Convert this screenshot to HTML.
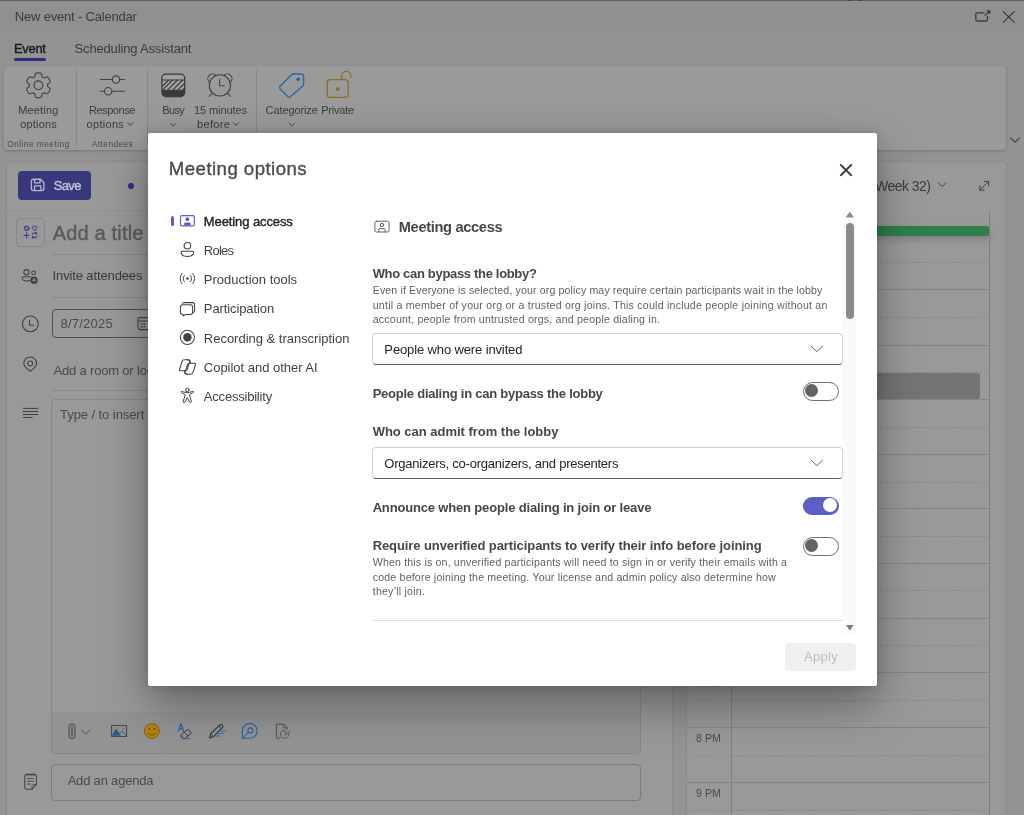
<!DOCTYPE html>
<html lang="en">
<head>
<meta charset="utf-8">
<title>New event - Calendar</title>
<style>
html,body{margin:0;padding:0;background:#939393;}
body{width:1024px;height:815px;overflow:hidden;font-family:"Liberation Sans",sans-serif;}
#app{will-change:transform;position:relative;width:1024px;height:815px;overflow:hidden;background:#939393;}
#app div,#app svg,#app span.t{position:absolute;}
span.t{white-space:nowrap;line-height:16px;height:16px;}
svg{overflow:visible;}
.titlebar{left:0;top:0;width:1024px;height:33px;background:#909090;border-top:1px solid #5e5e5e;box-sizing:border-box;border-top-right-radius:1.5px;}
.ribbon{left:4px;top:66px;width:1002px;height:84px;background:#9a9a9a;border-radius:4px;box-shadow:0 1px 3px rgba(0,0,0,.22);}
.vsep{width:1px;background:#868686;top:70px;height:76px;}
.tabline{left:14px;top:58px;width:32px;height:3px;border-radius:2px;background:#2b2b7f;}
.lpanel{left:7px;top:162px;width:665px;height:670px;background:#999999;border-radius:4px;box-shadow:0 0 2px rgba(0,0,0,.18);}
.rpanel{left:687px;top:162px;width:319px;height:670px;background:#999999;border-radius:4px;box-shadow:0 0 2px rgba(0,0,0,.18);}
.hline{height:1px;background:#888888;}
.save{left:18px;top:171px;width:73px;height:29px;background:#38397b;border-radius:4px;}
.dot{left:127.5px;top:183px;width:6px;height:6px;border-radius:3px;background:#2f2f86;}
.tbox{left:16px;top:218px;width:29px;height:28.5px;box-sizing:border-box;border:1px solid #878787;border-radius:4px;}
.datebox{left:52px;top:309px;width:110px;height:29px;box-sizing:border-box;border:1px solid #4e4e4e;border-radius:4px;}
.tarea{left:51px;top:399px;width:590px;height:355px;box-sizing:border-box;border:1px solid #888888;border-radius:4px;overflow:hidden;}
.tarea .band{left:0;top:312px;width:590px;height:43px;background:#939393;}
.agenda{left:51px;top:764px;width:590px;height:36.5px;box-sizing:border-box;border:1px solid #7c7c7c;border-radius:4px;}
.gridbox{left:687px;top:205px;width:302px;height:640px;}
.hr{left:0;width:302px;height:1px;background:#858585;}
.hd{left:0;width:302px;height:1px;background:repeating-linear-gradient(90deg,#8a8a8a 0 2.5px,rgba(0,0,0,0) 2.5px 4.5px);}
.green{left:731px;top:226px;width:258px;height:10px;background:#2f7f4a;border-radius:0 2px 2px 0;box-shadow:0 3px 6px rgba(0,0,0,.18);}
.evt{left:731px;top:373px;width:249px;height:26px;background:#757575;border-radius:3px;}
#modal{left:148px;top:133px;width:729px;height:553px;background:#ffffff;border-radius:2px;box-shadow:0 18px 46px rgba(0,0,0,.36),0 0 10px rgba(0,0,0,.15);}
.dd{box-sizing:border-box;left:372px;width:471px;height:32px;border:1px solid #d1d1d1;border-bottom:1px solid #616161;border-radius:4px;background:#fff;}
.track{left:843.3px;top:207px;width:13px;height:427px;background:#fafafa;}
.thumb{left:845.8px;top:222.8px;width:8px;height:96.5px;border-radius:4px;background:#8b8b8b;}
.divider{left:373px;top:620px;width:470px;height:1px;background:#e0e0e0;}
.apply{left:785px;top:642.5px;width:71px;height:28.5px;background:#f0f0f0;border-radius:4px;}
.tog{width:36px;height:19px;box-sizing:border-box;border-radius:10px;left:803px;}
.tog.off{border:1px solid #707070;background:#fff;}
.tog.off i{position:absolute;left:1.3px;top:1.2px;width:13px;height:13px;border-radius:7px;background:#646464;}
.tog.on{background:#5b5fc7;}
.tog.on i{position:absolute;right:1.8px;top:1.5px;width:14px;height:14px;border-radius:7px;background:#fff;}
.navbar{left:171px;top:216.4px;width:2.8px;height:10px;border-radius:1.5px;background:#5b5fc7;}

</style>
</head>
<body>
<div id="app">
<div class="titlebar"></div>
<div class="tabline"></div>
<div class="ribbon"></div>
<div class="vsep" style="left:76px"></div>
<div class="vsep" style="left:147px"></div>
<div class="vsep" style="left:255.5px"></div>
<div class="lpanel"></div>
<div class="rpanel"></div>
<div class="save"></div>
<div class="dot"></div>
<div class="hline" style="left:7px;top:210px;width:665px;background:#929292"></div>
<div class="tbox"></div>
<div class="hline" style="left:53px;top:254px;width:588px"></div>
<div class="hline" style="left:53px;top:297px;width:588px"></div>
<div class="datebox"></div>
<div class="hline" style="left:53px;top:390px;width:588px"></div>
<div class="tarea"><div class="band"></div></div>
<div class="agenda"></div>
<div class="gridbox">
<div style="left:44px;top:5px;width:1px;height:640px;background:#7f7f7f"></div>
<div style="left:301.5px;top:5px;width:1px;height:640px;background:#7f7f7f"></div>
<div class="hd" style="top:57px"></div>
<div class="hr" style="top:84px"></div>
<div class="hd" style="top:112px"></div>
<div class="hr" style="top:139.5px"></div>
<div class="hd" style="top:167px"></div>
<div class="hr" style="top:194px"></div>
<div class="hd" style="top:221.5px"></div>
<div class="hr" style="top:248.5px"></div>
<div class="hd" style="top:276.5px"></div>
<div class="hr" style="top:303px"></div>
<div class="hd" style="top:330.5px"></div>
<div class="hr" style="top:358px"></div>
<div class="hd" style="top:385px"></div>
<div class="hr" style="top:412.5px"></div>
<div class="hd" style="top:440px"></div>
<div class="hr" style="top:467px"></div>
<div class="hd" style="top:495px"></div>
<div class="hr" style="top:522px"></div>
<div class="hd" style="top:550px"></div>
<div class="hr" style="top:577px"></div>
<div class="hd" style="top:605px"></div>
</div>
<div class="green"></div>
<div class="evt"></div>
<svg id="bgicons" width="1024" height="815" viewBox="0 0 1024 815" style="left:0;top:0" fill="none" stroke-linecap="round" stroke-linejoin="round">
<path d="M848.3 0.5H850.3M859.6 0.5H861.6" stroke="#3a3a4a" stroke-width="1.2" stroke-linecap="butt"/>
<!-- window buttons -->
<g stroke="#3d3d3d" stroke-width="1.1">
<path d="M984 12.9H977.2Q975.8 12.9 975.8 14.3V19.6Q975.8 21 977.2 21H986.1Q987.5 21 987.5 19.6V16.4" stroke-width="1.35"/><path d="M985 15.4L988.6 12"/><path d="M987 10.7L990.1 10.5L989.9 13.6Z" fill="#3d3d3d" stroke-width="0.6"/>
<path d="M1003.2 11.5L1014.3 22.4M1014.3 11.5L1003.2 22.4"/>
<path d="M1010.6 137.8L1015 142.2L1019.4 137.8"/>
</g>
<g stroke="#3d3d3d" stroke-width="0.95">
<path d="M127.6 122.8L130.2 125.4L132.8 122.8"/>
<path d="M170.6 123.4L173.2 126L175.8 123.4"/>
<path d="M233.6 122.8L236.2 125.4L238.8 122.8"/>
<path d="M289 123.4L291.7 126L294.4 123.4"/>
</g>
<!-- ribbon: gear -->
<g stroke="#424242" stroke-width="1.15">
<path d="M47.50 85.30 L47.50 85.54 L47.51 85.78 L47.54 86.02 L47.60 86.27 L47.72 86.53 L47.96 86.81 L48.36 87.15 L48.91 87.53 L49.47 87.96 L49.85 88.37 L50.04 88.75 L50.07 89.09 L50.03 89.42 L49.95 89.73 L49.84 90.04 L49.72 90.34 L49.59 90.64 L49.44 90.93 L49.29 91.21 L49.14 91.50 L48.97 91.78 L48.80 92.05 L48.61 92.32 L48.42 92.58 L48.22 92.84 L48.01 93.08 L47.78 93.31 L47.52 93.51 L47.20 93.65 L46.79 93.69 L46.24 93.56 L45.59 93.29 L44.98 93.00 L44.49 92.82 L44.12 92.76 L43.84 92.78 L43.59 92.85 L43.37 92.95 L43.16 93.06 L42.95 93.18 L42.74 93.30 L42.54 93.43 L42.35 93.57 L42.16 93.75 L42.00 93.99 L41.87 94.33 L41.78 94.85 L41.72 95.52 L41.63 96.21 L41.47 96.75 L41.23 97.10 L40.95 97.31 L40.65 97.43 L40.34 97.52 L40.02 97.58 L39.70 97.62 L39.37 97.66 L39.05 97.68 L38.72 97.69 L38.40 97.70 L38.08 97.69 L37.75 97.68 L37.43 97.66 L37.10 97.62 L36.78 97.58 L36.46 97.52 L36.15 97.43 L35.85 97.31 L35.57 97.10 L35.33 96.75 L35.17 96.21 L35.08 95.52 L35.02 94.85 L34.93 94.33 L34.80 93.99 L34.64 93.75 L34.45 93.57 L34.26 93.43 L34.06 93.30 L33.85 93.18 L33.64 93.06 L33.43 92.95 L33.21 92.85 L32.96 92.78 L32.68 92.76 L32.31 92.82 L31.82 93.00 L31.21 93.29 L30.56 93.56 L30.01 93.69 L29.60 93.65 L29.28 93.51 L29.02 93.31 L28.79 93.08 L28.58 92.84 L28.38 92.58 L28.19 92.32 L28.00 92.05 L27.83 91.78 L27.66 91.50 L27.51 91.21 L27.36 90.93 L27.21 90.64 L27.08 90.34 L26.96 90.04 L26.85 89.73 L26.77 89.42 L26.73 89.09 L26.76 88.75 L26.95 88.37 L27.33 87.96 L27.89 87.53 L28.44 87.15 L28.84 86.81 L29.08 86.53 L29.20 86.27 L29.26 86.02 L29.29 85.78 L29.30 85.54 L29.30 85.30 L29.30 85.06 L29.29 84.82 L29.26 84.58 L29.20 84.33 L29.08 84.07 L28.84 83.79 L28.44 83.45 L27.89 83.07 L27.33 82.64 L26.95 82.23 L26.76 81.85 L26.73 81.51 L26.77 81.18 L26.85 80.87 L26.96 80.56 L27.08 80.26 L27.21 79.96 L27.36 79.67 L27.51 79.39 L27.66 79.10 L27.83 78.82 L28.00 78.55 L28.19 78.28 L28.38 78.02 L28.58 77.76 L28.79 77.52 L29.02 77.29 L29.28 77.09 L29.60 76.95 L30.01 76.91 L30.56 77.04 L31.21 77.31 L31.82 77.60 L32.31 77.78 L32.68 77.84 L32.96 77.82 L33.21 77.75 L33.43 77.65 L33.64 77.54 L33.85 77.42 L34.06 77.30 L34.26 77.17 L34.45 77.03 L34.64 76.85 L34.80 76.61 L34.93 76.27 L35.02 75.75 L35.08 75.08 L35.17 74.39 L35.33 73.85 L35.57 73.50 L35.85 73.29 L36.15 73.17 L36.46 73.08 L36.78 73.02 L37.10 72.98 L37.43 72.94 L37.75 72.92 L38.08 72.91 L38.40 72.90 L38.72 72.91 L39.05 72.92 L39.37 72.94 L39.70 72.98 L40.02 73.02 L40.34 73.08 L40.65 73.17 L40.95 73.29 L41.23 73.50 L41.47 73.85 L41.63 74.39 L41.72 75.08 L41.78 75.75 L41.87 76.27 L42.00 76.61 L42.16 76.85 L42.35 77.03 L42.54 77.17 L42.74 77.30 L42.95 77.42 L43.16 77.54 L43.37 77.65 L43.59 77.75 L43.84 77.82 L44.12 77.84 L44.49 77.78 L44.98 77.60 L45.59 77.31 L46.24 77.04 L46.79 76.91 L47.20 76.95 L47.52 77.09 L47.78 77.29 L48.01 77.52 L48.22 77.76 L48.42 78.02 L48.61 78.28 L48.80 78.55 L48.97 78.82 L49.14 79.10 L49.29 79.39 L49.44 79.67 L49.59 79.96 L49.72 80.26 L49.84 80.56 L49.95 80.87 L50.03 81.18 L50.07 81.51 L50.04 81.85 L49.85 82.23 L49.47 82.64 L48.91 83.07 L48.36 83.45 L47.96 83.79 L47.72 84.07 L47.60 84.33 L47.54 84.58 L47.51 84.82 L47.50 85.06Z"/>
<circle cx="38.4" cy="85.3" r="4.4"/>
<!-- sliders -->
<path d="M100.2 79.5H112.2M119.8 79.5H124.5M100.2 91.2H104.4M112 91.2H124.5"/>
<circle cx="116" cy="79.5" r="3.7"/><circle cx="108.2" cy="91.2" r="3.7"/>
</g>
<!-- busy -->
<g>
<rect x="161.9" y="74.1" width="22.8" height="22.4" rx="4" fill="#a2a2a2" stroke="none"/>
<path d="M161.9 89.7H184.7V92.5a4 4 0 0 1 -4 4H165.9a4 4 0 0 1 -4 -4Z" fill="#3a3a3a" stroke="none"/>
<g stroke="#3f3f3f" stroke-width="1.25" stroke-linecap="butt">
<path d="M162 86.6L168.6 80M162.6 89.9L172.6 80M167.6 89.9L177.6 80M172.8 89.9L182.8 80M178 89.9L184.7 83.2M182.6 90L184.7 88"/>
</g>
<path d="M161.9 80H184.7" stroke="#3a3a3a" stroke-width="1.1"/>
<rect x="161.9" y="74.1" width="22.8" height="22.4" rx="4" stroke="#3a3a3a" stroke-width="1.25"/>
</g>
<!-- alarm -->
<g stroke="#424242" stroke-width="1.1">
<circle cx="219.9" cy="85.4" r="10.6"/>
<path d="M208.9 81.6A4.6 4.6 0 0 1 216 75.6M223.8 75.6A4.6 4.6 0 0 1 230.9 81.6"/>
<path d="M212.4 93.2L209.3 96.4M227.4 93.2L230.5 96.4"/>
<path d="M219.6 79.4V85.8H224.4"/>
</g>
<!-- tag -->
<g stroke="#2a67a6" stroke-width="1.35">
<path d="M293.4 74H300.8Q303.6 74 303.6 76.8V83.8Q303.6 85 302.7 85.9L290.6 96.6Q289.1 97.8 287.7 96.4L280.1 88.9Q278.8 87.5 280.1 86.2L291.5 74.8Q292.3 74 293.4 74Z"/>
<circle cx="298.1" cy="79.3" r="1.7" fill="#1f5fa3" stroke="none"/>
</g>
<!-- lock -->
<g stroke="#8c6d22" stroke-width="1.3">
<rect x="327.2" y="79.6" width="21" height="17.8" rx="3.2"/>
<path d="M341.7 79.4V75.8A4.55 4.55 0 0 1 350.8 75.8V77.4"/>
<circle cx="337.6" cy="89.2" r="1.9" fill="#8c6d22" stroke="none"/>
</g>
<!-- save floppy -->
<g stroke="#b4b4cb" stroke-width="1.35">
<path d="M33.4 179.2H40.4L43.9 182.7V188.6Q43.9 190.6 41.9 190.6H33.4Q31.4 190.6 31.4 188.6V181.2Q31.4 179.2 33.4 179.2Z"/>
<path d="M34.6 179.4V182.8H40V179.4M34.6 190.4V185.8H40.8V190.4"/>
</g>
<!-- title glyph box -->
<g stroke="#2f2f86" stroke-width="0.95">
<circle cx="26.6" cy="228.4" r="2.3"/><path d="M25 226.8L28.2 230"/>
<path d="M34.5 230.6L32.3 228.3A1.25 1.25 0 0 1 34.5 227A1.25 1.25 0 0 1 36.7 228.3Z"/>
<path d="M24 235.4H29.2M26.6 232.8V238"/>
<path d="M32.2 234.6A2.4 2.4 0 0 1 36.4 233.6M36.8 236A2.4 2.4 0 0 1 32.6 237M36.6 232.4V233.8H35.2M32.4 238.2V236.8H33.8"/>
</g>
<!-- people add -->
<g stroke="#424242" stroke-width="1.05">
<circle cx="26.4" cy="272.2" r="2.6"/>
<circle cx="33.6" cy="272.8" r="1.9"/>
<path d="M30.4 276.7H23.1Q22 276.7 22 277.8Q22.3 281 26.4 281Q28.2 281 29.4 280.5"/>
<circle cx="34" cy="280.2" r="3.7" fill="#3f3f3f" stroke="none"/>
<path d="M32.1 280.2H35.9M34 278.3V282.1" stroke="#9a9a9a" stroke-width="0.9"/>
</g>
<!-- clock -->
<g stroke="#424242" stroke-width="1.1">
<circle cx="30.3" cy="323.9" r="7.9"/>
<path d="M29.5 320.2V325.2H33.8"/>
</g>
<!-- calendar in date box -->
<g stroke="#424242" stroke-width="1.05">
<rect x="138" y="317.6" width="12.4" height="12" rx="2"/>
<path d="M138 321H150.4"/>
<path d="M141.4 324H142M144 324H144.6M141.4 326.8H142M144 326.8H144.6" stroke-width="1.5"/>
</g>
<!-- location pin -->
<g stroke="#424242" stroke-width="1.1">
<path d="M30.2 371.2Q36.6 366.6 36.6 363.4A6.4 6.4 0 0 0 23.8 363.4Q23.8 366.6 30.2 371.2Z"/>
<circle cx="30.2" cy="363.4" r="2.4"/>
</g>
<!-- paragraph lines -->
<g stroke="#424242" stroke-width="1">
<path d="M23.2 408.4H37.8M23.2 411.5H37.8M23.2 414.5H37.8M23.2 417.5H32.2"/>
</g>
<!-- toolbar: attach -->
<g>
<path d="M69 727.2Q69 723.9 72 723.9Q75 723.9 75 727.2V735.6Q75 738.4 72 738.4Q69 738.4 69 735.6Z" fill="#8a8a8a" stroke="#606060" stroke-width="1.5"/>
<path d="M72 727.2V735.2" stroke="#626262" stroke-width="1.7"/>
<path d="M81.6 730.2L85.6 734L89.7 730.2" stroke="#555" stroke-width="1"/>
</g>
<!-- image -->
<g>
<rect x="111.6" y="725.5" width="15" height="11" stroke="#4a4a4a" stroke-width="1.1" fill="#8f8f8f"/>
<path d="M112.6 735.6L116 729.6L120.2 735.6Z" fill="#1d5ba3" stroke="#1d5ba3" stroke-width="0.5"/>
<path d="M120 734.4L122.6 731.8L125.8 735.6H121Z" fill="#7f93aa" stroke="none"/>
<path d="M113 735L116 729.6L119.2 734.2L122.4 731.2L126 735.4" stroke="#3f3f3f" stroke-width="0.7"/>
<circle cx="123.6" cy="728.2" r="0.55" fill="#333" stroke="none"/>
</g>
<!-- emoji -->
<g>
<circle cx="151.9" cy="731.1" r="7.4" fill="#b3830f" stroke="#80611a" stroke-width="1"/>
<circle cx="149.3" cy="729" r="0.9" fill="#6a4f10" stroke="none"/><circle cx="154.5" cy="729" r="0.9" fill="#6a4f10" stroke="none"/>
<path d="M148.2 733.4Q151.9 736.8 155.6 733.4" stroke="#6a4f10" stroke-width="1"/>
</g>
<!-- format -->
<g>
<path d="M178.2 731.4L180.9 723.8L183.6 731.4M179.2 728.8H182.6" stroke="#2461a8" stroke-width="1.15"/>
<path d="M181 735L187.8 729.2L191.4 733L185.2 738.4H182.8L180.9 736.6Q180.3 735.7 181 735Z" stroke="#3a3a3a" stroke-width="1" fill="#949494"/>
<path d="M184.4 732.2L188.2 736" stroke="#3a3a3a" stroke-width="0.9"/>
<circle cx="182.6" cy="736.2" r="0.7" fill="#2461a8" stroke="none"/>
<path d="M184.6 738.7H189.8" stroke="#2461a8" stroke-width="0.9"/>
</g>
<!-- pen -->
<g>
<path d="M209.6 738L210.8 733.6L220 724.8Q221.2 723.8 222.4 725Q223.4 726.2 222.4 727.4L213.6 736.6Z" stroke="#333" stroke-width="1.05"/>
<path d="M211 733.8L213.4 736.4M218.8 726L221.2 728.6" stroke="#333" stroke-width="0.8"/>
<path d="M220.6 731H225.8M218 733.5H223.2M215.2 736H220.2" stroke="#2a67a6" stroke-width="0.85"/>
</g>
<!-- loop -->
<g stroke="#2a67a6" stroke-width="1.15">
<path d="M242.4 738.2V730.8A7.4 7.4 0 1 1 249.8 738.2Z"/>
<circle cx="250.4" cy="730.4" r="2.5"/>
<path d="M248.6 732.2L243.4 737.4"/>
</g>
<!-- doc -->
<g stroke="#4f4f4f" stroke-width="1">
<path d="M280 738.2H276.4V724.2H283.8L287.2 727.6V729"/>
<path d="M283.6 724.4V727.8H287" stroke-width="0.8"/>
<path d="M288.8 733.2A4.2 4.2 0 1 1 284.8 730" stroke="#5a5a5a"/>
<path d="M285 731V734.4H287.2M289.8 731.4L288.8 733.4L286.8 732.6" stroke="#5a5a5a" stroke-width="0.85"/>
</g>
<!-- agenda icon -->
<g stroke="#424242" stroke-width="1.05">
<path d="M26.6 774.6H34.6Q36.4 774.6 36.4 776.4V784.4L32 789.2H26.6Q24.8 789.2 24.8 787.4V776.4Q24.8 774.6 26.6 774.6Z"/>
<path d="M36.2 784.6H33.4Q32 784.6 32 786V789" stroke-width="0.9"/>
<path d="M27.6 778.4H33.6M27.6 781.2H33.6M27.6 784H30.4" stroke-width="0.9"/>
<path d="M27.6 773.4V775M30.6 773.4V775M33.6 773.4V775" stroke-width="0.9"/>
</g>
<!-- calendar header -->
<g stroke="#424242" stroke-width="1">
<path d="M938.4 182.8L942.2 186.6L946 182.8"/>
<path d="M980 190L988.4 181.6M984.4 181.4H988.6V185.6M979.8 185.8V190.2H984"/>
</g>
</svg>

<span class="t" style="left:14.85px;top:8.50px;font-size:13px;color:#3b3b3b;letter-spacing:-0.196px;">New event - Calendar</span>
<span class="t" style="left:14.04px;top:40.50px;font-size:13px;color:#1a1a1a;-webkit-text-stroke:0.38px currentColor;letter-spacing:-0.335px;">Event</span>
<span class="t" style="left:74.55px;top:40.50px;font-size:13px;color:#3b3b3b;letter-spacing:-0.161px;">Scheduling Assistant</span>
<span class="t" style="left:18.21px;top:102.00px;font-size:11px;color:#3b3b3b;letter-spacing:0.155px;">Meeting</span>
<span class="t" style="left:20.21px;top:116.00px;font-size:11px;color:#3b3b3b;letter-spacing:0.198px;">options</span>
<span class="t" style="left:7.21px;top:136.00px;font-size:8.4px;color:#4a4a4a;letter-spacing:0.442px;">Online meeting</span>
<span class="t" style="left:88.91px;top:102.00px;font-size:11px;color:#3b3b3b;letter-spacing:-0.440px;">Response</span>
<span class="t" style="left:86.61px;top:116.00px;font-size:11px;color:#3b3b3b;letter-spacing:0.298px;">options</span>
<span class="t" style="left:91.91px;top:136.00px;font-size:8.4px;color:#4a4a4a;letter-spacing:0.396px;">Attendees</span>
<span class="t" style="left:162.31px;top:102.00px;font-size:11px;color:#3b3b3b;letter-spacing:-0.633px;">Busy</span>
<span class="t" style="left:194.02px;top:102.00px;font-size:11px;color:#3b3b3b;letter-spacing:-0.094px;">15 minutes</span>
<span class="t" style="left:197.02px;top:116.00px;font-size:11px;color:#3b3b3b;letter-spacing:0.333px;">before</span>
<span class="t" style="left:265.62px;top:102.00px;font-size:11px;color:#3b3b3b;letter-spacing:-0.115px;">Categorize</span>
<span class="t" style="left:321.22px;top:102.00px;font-size:11px;color:#3b3b3b;letter-spacing:-0.230px;">Private</span>
<span class="t" style="left:53.75px;top:177.50px;font-size:13px;color:#c2c2d4;-webkit-text-stroke:0.38px currentColor;letter-spacing:-0.644px;">Save</span>
<span class="t" style="left:52.70px;top:225.00px;font-size:20px;color:#5a5a5a;-webkit-text-stroke:0.38px currentColor;letter-spacing:0.175px;">Add a title</span>
<span class="t" style="left:52.55px;top:267.50px;font-size:13px;color:#3b3b3b;letter-spacing:-0.126px;">Invite attendees</span>
<span class="t" style="left:60.45px;top:315.50px;font-size:13px;color:#4a4a4a;letter-spacing:0.243px;">8/7/2025</span>
<span class="t" style="left:53.55px;top:362.50px;font-size:13px;color:#4a4a4a;letter-spacing:-0.185px;">Add a room or location</span>
<span class="t" style="left:60.05px;top:406.50px;font-size:13px;color:#4a4a4a;letter-spacing:-0.071px;">Type / to insert files and more</span>
<span class="t" style="left:67.64px;top:772.50px;font-size:13px;color:#4a4a4a;letter-spacing:-0.191px;">Add an agenda</span>
<span class="t" style="left:769.51px;top:178.00px;font-size:14px;color:#3b3b3b;letter-spacing:-0.535px;">Thu, Aug 7, 2025 (Week 32)</span>
<span class="t" style="left:696.03px;top:675.00px;font-size:10.5px;color:#4a4a4a;letter-spacing:0.073px;">7 PM</span>
<span class="t" style="left:696.03px;top:730.00px;font-size:10.5px;color:#4a4a4a;letter-spacing:0.073px;">8 PM</span>
<span class="t" style="left:696.03px;top:785.00px;font-size:10.5px;color:#4a4a4a;letter-spacing:0.073px;">9 PM</span>
<div id="modal"></div>
<div class="navbar"></div>
<div class="dd" style="top:333px"></div>
<div class="dd" style="top:447px"></div>
<div class="tog off" style="top:382px"><i></i></div>
<div class="tog on" style="top:496.5px;height:18.5px"><i></i></div>
<div class="tog off" style="top:537px"><i></i></div>
<div class="track"></div>
<div class="thumb"></div>
<div class="divider"></div>
<div class="apply"></div>
<svg id="micons" width="1024" height="815" viewBox="0 0 1024 815" style="left:0;top:0" fill="none" stroke-linecap="round" stroke-linejoin="round">
<!-- close X -->
<path d="M840.8 165L851.2 175.2M851.2 165L840.8 175.2" stroke="#424242" stroke-width="1.9"/>
<!-- nav: meeting access (active) -->
<g>
<rect x="180.5" y="215.6" width="13.8" height="10.2" rx="1.6" stroke="#5b5fc7" stroke-width="1.15"/>
<circle cx="187.4" cy="219.2" r="1.9" fill="#5b5fc7"/>
<path d="M184.2 225.4V223.6Q184.2 222.5 185.3 222.5H189.5Q190.6 222.5 190.6 223.6V225.4Z" fill="#5b5fc7"/>
</g>
<!-- roles -->
<g stroke="#424242" stroke-width="1.05">
<circle cx="187.4" cy="245.7" r="3.3"/>
<path d="M182.2 251.2H192.6Q193.8 251.2 193.8 252.4Q193.2 256.4 187.4 256.4Q181.6 256.4 181 252.4Q181 251.2 182.2 251.2Z"/>
</g>
<!-- production tools -->
<g stroke="#424242" stroke-width="1">
<circle cx="187.4" cy="278.6" r="1.25" fill="#424242" stroke="none"/>
<path d="M184.4 275.4A4.6 4.6 0 0 0 184.4 281.8M190.4 275.4A4.6 4.6 0 0 1 190.4 281.8"/>
<path d="M182 273.6A7.4 7.4 0 0 0 182 283.6M192.8 273.6A7.4 7.4 0 0 1 192.8 283.6"/>
</g>
<!-- participation -->
<g stroke="#424242" stroke-width="1.05">
<path d="M182.6 303.2Q183.2 302.6 184.6 302.6H192.2Q194.6 302.6 194.6 305V310.6Q194.6 312 193.4 312.6"/>
<path d="M182.6 304.8H190.4Q192.6 304.8 192.6 307V312.2Q192.6 314.4 190.4 314.4H185.6L183.2 316V314.4H182.6Q180.4 314.4 180.4 312.2V307Q180.4 304.8 182.6 304.8Z"/>
</g>
<!-- recording -->
<g>
<circle cx="187.4" cy="337.3" r="7.1" stroke="#424242" stroke-width="1.05"/>
<circle cx="187.4" cy="337.3" r="4.2" fill="#424242"/>
</g>
<!-- copilot -->
<g stroke="#424242" stroke-width="1.05">
<path d="M184.2 359.8H188.6Q190.4 359.8 189.8 361.6L187.4 369Q186.8 370.8 185 370.8H180.8Q179 370.8 179.6 369L182 361.6Q182.6 359.8 184.2 359.8Z"/>
<path d="M190 363.2H194.2Q196 363.2 195.4 365L193 372.4Q192.4 374.2 190.6 374.2H186.2Q184.4 374.2 185 372.4L187.4 365Q188 363.2 190 363.2Z"/>
<path d="M187.2 359.8Q190.4 360 190.4 363.2M187.6 374.2Q184.4 374 184.6 370.8"/>
</g>
<!-- accessibility -->
<g stroke="#424242" stroke-width="1">
<circle cx="187.3" cy="390" r="1.75"/>
<path d="M181.8 391.4Q181 391.2 181.2 392.2Q181.4 392.8 182 393L184.8 394.2Q185.2 394.4 185.1 395L183.2 401.4Q183 402.4 183.9 402.6Q184.6 402.8 185 402L187.3 397.6L189.6 402Q190 402.8 190.7 402.6Q191.6 402.4 191.4 401.4L189.5 395Q189.4 394.4 189.8 394.2L192.6 393Q193.2 392.8 193.4 392.2Q193.6 391.2 192.8 391.4L189.4 392.4Q187.3 393 185.2 392.4Z"/>
</g>
<!-- section header icon -->
<g stroke="#616161" stroke-width="1">
<rect x="374.9" y="221.2" width="14.2" height="10.8" rx="1.6"/>
<circle cx="382" cy="225" r="1.7"/>
<path d="M378.8 231.6V229.8Q378.8 228.6 380 228.6H384Q385.2 228.6 385.2 229.8V231.6"/>
</g>
<!-- dropdown chevrons -->
<g stroke="#616161" stroke-width="1">
<path d="M811.2 346.2L816.9 351.6L822.6 346.2"/>
<path d="M811.2 460.2L816.9 465.6L822.6 460.2"/>
</g>
<!-- scroll arrows -->
<path d="M845.7 217.4L849.8 211.4L853.9 217.4Z" fill="#8b8b8b"/>
<path d="M846 624.9L849.8 630.5L853.6 624.9Z" fill="#777777"/>
</svg>

<span class="t" style="left:168.85px;top:160.50px;font-size:18.6px;color:#4d4d4d;-webkit-text-stroke:0.38px currentColor;letter-spacing:0.459px;">Meeting options</span>
<span class="t" style="left:203.84px;top:213.50px;font-size:13px;color:#242424;-webkit-text-stroke:0.38px currentColor;letter-spacing:-0.101px;">Meeting access</span>
<span class="t" style="left:203.84px;top:242.50px;font-size:13px;color:#424242;letter-spacing:-0.785px;">Roles</span>
<span class="t" style="left:203.84px;top:271.50px;font-size:13px;color:#424242;letter-spacing:0.005px;">Production tools</span>
<span class="t" style="left:203.84px;top:300.50px;font-size:13px;color:#424242;letter-spacing:-0.103px;">Participation</span>
<span class="t" style="left:203.84px;top:330.50px;font-size:13px;color:#424242;letter-spacing:-0.015px;">Recording &amp; transcription</span>
<span class="t" style="left:203.84px;top:359.50px;font-size:13px;color:#424242;letter-spacing:-0.021px;">Copilot and other AI</span>
<span class="t" style="left:203.84px;top:388.50px;font-size:13px;color:#424242;letter-spacing:-0.207px;">Accessibility</span>
<span class="t" style="left:398.79px;top:219.00px;font-size:14.6px;color:#474747;font-weight:700;letter-spacing:-0.313px;">Meeting access</span>
<span class="t" style="left:372.65px;top:265.50px;font-size:13px;color:#474747;font-weight:700;letter-spacing:-0.321px;">Who can bypass the lobby?</span>
<span class="t" style="left:372.73px;top:282.00px;font-size:10.6px;color:#616161;letter-spacing:0.128px;">Even if Everyone is selected, your org policy may require certain participants wait in the lobby</span>
<span class="t" style="left:372.73px;top:297.00px;font-size:10.6px;color:#616161;letter-spacing:0.228px;">until a member of your org or a trusted org joins. This could include people joining without an</span>
<span class="t" style="left:372.73px;top:311.00px;font-size:10.6px;color:#616161;letter-spacing:0.200px;">account, people from untrusted orgs, and people dialing in.</span>
<span class="t" style="left:384.35px;top:341.50px;font-size:13px;color:#242424;letter-spacing:-0.128px;">People who were invited</span>
<span class="t" style="left:372.65px;top:385.50px;font-size:13px;color:#474747;font-weight:700;letter-spacing:-0.241px;">People dialing in can bypass the lobby</span>
<span class="t" style="left:372.65px;top:423.50px;font-size:13px;color:#474747;font-weight:700;letter-spacing:-0.020px;">Who can admit from the lobby</span>
<span class="t" style="left:384.35px;top:455.50px;font-size:13px;color:#242424;letter-spacing:-0.235px;">Organizers, co-organizers, and presenters</span>
<span class="t" style="left:372.65px;top:499.50px;font-size:13px;color:#474747;font-weight:700;letter-spacing:-0.164px;">Announce when people dialing in join or leave</span>
<span class="t" style="left:372.65px;top:537.50px;font-size:13px;color:#474747;font-weight:700;letter-spacing:-0.082px;">Require unverified participants to verify their info before joining</span>
<span class="t" style="left:372.73px;top:554.00px;font-size:10.6px;color:#616161;letter-spacing:0.167px;">When this is on, unverified participants will need to sign in or verify their emails with a</span>
<span class="t" style="left:372.73px;top:569.00px;font-size:10.6px;color:#616161;letter-spacing:0.187px;">code before joining the meeting. Your license and admin policy also determine how</span>
<span class="t" style="left:372.73px;top:583.00px;font-size:10.6px;color:#616161;letter-spacing:0.223px;">they’ll join.</span>
<span class="t" style="left:803.94px;top:648.50px;font-size:13px;color:#bdbdbd;letter-spacing:0.345px;">Apply</span>
</div>
</body>
</html>
